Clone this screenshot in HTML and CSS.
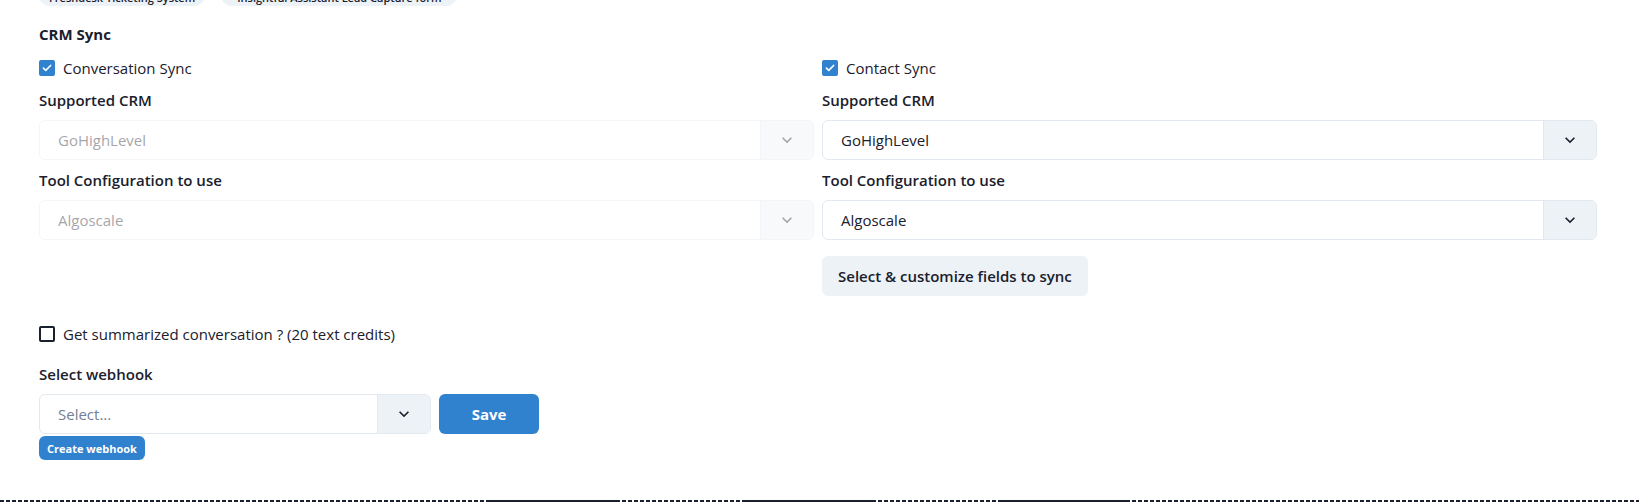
FILE: index.html
```html
<!DOCTYPE html>
<html lang="en">
<head>
<meta charset="utf-8">
<title>CRM Sync</title>
<link rel="stylesheet" href="styles.css">
</head>
<body>
<div class="page">
  <div class="chips">
    <span class="chip">Freshdesk Ticketing System</span>
    <span class="chip chip-wide">Insightful Assistant Lead Capture form</span>
  </div>

  <h2 class="section-title">CRM Sync</h2>

  <div class="crm-grid">
    <div class="crm-col">
      <label class="check-row">
        <span class="checkbox checked">
          <svg viewBox="0 0 12 10" width="10" height="8"><polyline points="1.5,5.2 4.5,8 10.5,1.8" fill="none" stroke="#fff" stroke-width="2" stroke-linecap="round" stroke-linejoin="round"/></svg>
        </span>
        <span class="check-text">Conversation Sync</span>
      </label>
      <div class="field-label">Supported CRM</div>
      <div class="select disabled">
        <div class="select-value">GoHighLevel</div>
        <div class="select-ind"><svg viewBox="0 0 24 24" width="20" height="20"><path d="M16.59 8.59L12 13.17 7.41 8.59 6 10l6 6 6-6z" fill="currentColor"/></svg></div>
      </div>
      <div class="field-label">Tool Configuration to use</div>
      <div class="select disabled">
        <div class="select-value">Algoscale</div>
        <div class="select-ind"><svg viewBox="0 0 24 24" width="20" height="20"><path d="M16.59 8.59L12 13.17 7.41 8.59 6 10l6 6 6-6z" fill="currentColor"/></svg></div>
      </div>
    </div>

    <div class="crm-col">
      <label class="check-row">
        <span class="checkbox checked">
          <svg viewBox="0 0 12 10" width="10" height="8"><polyline points="1.5,5.2 4.5,8 10.5,1.8" fill="none" stroke="#fff" stroke-width="2" stroke-linecap="round" stroke-linejoin="round"/></svg>
        </span>
        <span class="check-text">Contact Sync</span>
      </label>
      <div class="field-label">Supported CRM</div>
      <div class="select">
        <div class="select-value">GoHighLevel</div>
        <div class="select-ind"><svg viewBox="0 0 24 24" width="20" height="20"><path d="M16.59 8.59L12 13.17 7.41 8.59 6 10l6 6 6-6z" fill="currentColor"/></svg></div>
      </div>
      <div class="field-label">Tool Configuration to use</div>
      <div class="select">
        <div class="select-value">Algoscale</div>
        <div class="select-ind"><svg viewBox="0 0 24 24" width="20" height="20"><path d="M16.59 8.59L12 13.17 7.41 8.59 6 10l6 6 6-6z" fill="currentColor"/></svg></div>
      </div>
      <div class="btn-row">
        <button class="btn-gray">Select &amp; customize fields to sync</button>
      </div>
    </div>
  </div>

  <label class="check-row summ-row">
    <span class="checkbox"></span>
    <span class="check-text">Get summarized conversation ? (20 text credits)</span>
  </label>

  <div class="field-label webhook-label">Select webhook</div>
  <div class="webhook-row">
    <div class="select webhook-select">
      <div class="select-value placeholder">Select...</div>
      <div class="select-ind"><svg viewBox="0 0 24 24" width="20" height="20"><path d="M16.59 8.59L12 13.17 7.41 8.59 6 10l6 6 6-6z" fill="currentColor"/></svg></div>
    </div>
    <button class="btn-blue">Save</button>
  </div>
  <button class="btn-xs">Create webhook</button>
</div>

<div class="bottom-line">
  <span class="seg dashed s1"></span>
  <span class="seg solid s2"></span>
  <span class="seg dashed s3"></span>
  <span class="seg solid s4"></span>
  <span class="seg dashed s5"></span>
  <span class="seg solid s6"></span>
  <span class="seg dashed s7"></span>
</div>
</body>
</html>
```

FILE: styles.css
```css
* { box-sizing: border-box; }

html, body {
  margin: 0;
  padding: 0;
  background: #ffffff;
  overflow: hidden;
}

body {
  font-family: "Open Sans", "Noto Sans", sans-serif;
  font-size: 15px;
  color: #1a202c;
  height: 502px;
}

.page {
  padding: 0 42px 0 39px;
}

.chips {
  display: flex;
  gap: 16px;
  margin-top: -16px;
  height: 22px;
}

.chip {
  display: inline-flex;
  align-items: flex-end;
  height: 22px;
  padding: 0 10px 1px;
  background: #edf2f7;
  border-radius: 999px;
  font-size: 11px;
  font-weight: 600;
  line-height: 14px;
  white-space: nowrap;
  color: #1a202c;
}

.chip-wide {
  padding: 0 16px 1px;
}

.section-title {
  margin: 16px 0 0;
  font-size: 15px;
  font-weight: 700;
  line-height: 24px;
}

.crm-grid {
  display: grid;
  grid-template-columns: 1fr 1fr;
  column-gap: 8px;
  margin-top: 10px;
}

.crm-col {
  display: flex;
  flex-direction: column;
}

.check-row {
  display: flex;
  align-items: center;
  gap: 8px;
  height: 24px;
  line-height: 24px;
}

.checkbox {
  width: 16px;
  height: 16px;
  flex: none;
  border: 2px solid #1a202c;
  border-radius: 2px;
  display: flex;
  align-items: center;
  justify-content: center;
}

.checkbox.checked {
  background: #3182ce;
  border-color: #3182ce;
}

.check-text {
  font-size: 15px;
}

.field-label {
  margin-top: 8px;
  margin-bottom: 8px;
  font-size: 15px;
  font-weight: 600;
  line-height: 24px;
}

.select {
  display: flex;
  height: 40px;
  border: 1px solid #e2e8f0;
  border-radius: 6px;
  overflow: hidden;
  background: #fff;
}

.select.disabled {
  opacity: 0.4;
}

.select-value {
  flex: 1;
  padding-left: 18px;
  line-height: 38px;
  font-size: 15px;
  white-space: nowrap;
}

.select-value.placeholder {
  color: #718096;
}

.select-ind {
  width: 53px;
  flex: none;
  background: #edf2f7;
  border-left: 1px solid #e2e8f0;
  display: flex;
  align-items: center;
  justify-content: center;
  color: #1a202c;
}

.btn-row {
  margin-top: 16px;
  display: flex;
}

.btn-gray {
  height: 40px;
  padding: 0 16px;
  border: none;
  border-radius: 6px;
  background: #edf2f7;
  color: #1a202c;
  font-family: inherit;
  font-size: 15px;
  font-weight: 600;
}

.summ-row {
  margin-top: 26px;
}

.webhook-label {
  margin-top: 16px;
}

.webhook-row {
  display: flex;
  gap: 8px;
}

.webhook-select {
  width: 392px;
}

.btn-blue {
  width: 100px;
  height: 40px;
  border: none;
  border-radius: 6px;
  background: #3182ce;
  color: #fff;
  font-family: inherit;
  font-size: 15px;
  font-weight: 700;
}

.btn-xs {
  display: block;
  margin-top: 2px;
  height: 24px;
  padding: 0 8px;
  border: none;
  border-radius: 6px;
  background: #3182ce;
  color: #fff;
  font-family: inherit;
  font-size: 11px;
  font-weight: 700;
}

.bottom-line {
  display: flex;
  margin-top: 40px;
  height: 2px;
}

.seg { height: 2px; display: block; }
.seg.dashed {
  background: repeating-linear-gradient(90deg, #1a202c 0 4px, transparent 4px 6px);
}
.seg.solid { background: #1a202c; }
.s1 { width: 486px; }
.s2 { width: 130px; }
.s3 { width: 126px; }
.s4 { width: 130px; }
.s5 { width: 128px; }
.s6 { width: 126px; }
.s7 { flex: 1; }
```
